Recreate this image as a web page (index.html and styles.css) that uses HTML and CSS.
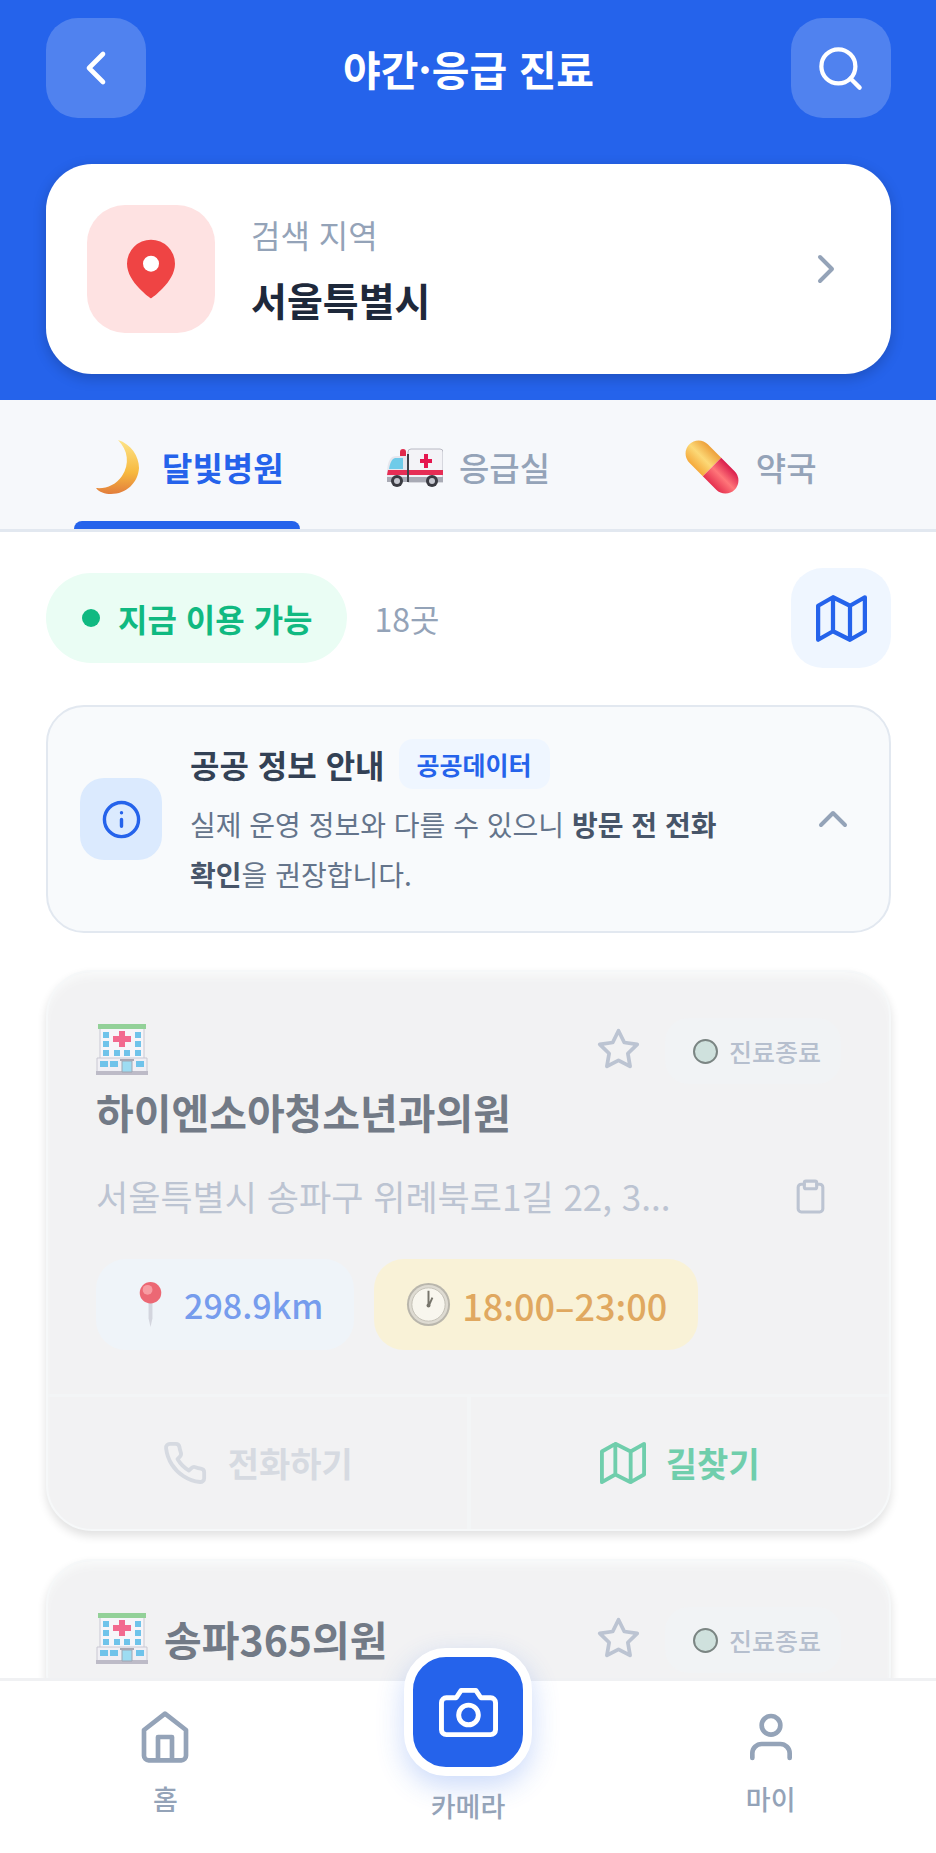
FILE: index.html
```
<!DOCTYPE html>
<html lang="ko">
<head>
<meta charset="UTF-8">
<meta name="viewport" content="width=device-width, initial-scale=1.0">
<title>야간·응급 진료</title>
<link rel="stylesheet" href="styles.css">
</head>
<body>
<svg class="defs" width="0" height="0" aria-hidden="true">
    <symbol id="map" viewBox="0 0 24 24">
        <path d="M1 6v16l7-4 8 4 7-4V2l-7 4-8-4-7 4zM8 2v16M16 6v16"/>
    </symbol>
    <symbol id="star" viewBox="0 0 24 24">
        <path d="M12 2l3.09 6.26L22 9.27l-5 4.87 1.18 6.88L12 17.77l-6.18 3.25L7 14.14 2 9.27l6.91-1.01z"/>
    </symbol>
    <symbol id="hospital" viewBox="0 0 52 52">
        <path d="M4 5h44v31H4z" fill="#f6f5f9" stroke="#c9c8d2"/>
        <path d="M2 1h48v5H2z" fill="#93d198"/>
        <path d="M1 35h50v14H1z" fill="#f0eff4" stroke="#c9c8d2"/>
        <path d="M0 48h52v4H0z" fill="#bdbbc7"/>
        <path d="M23 8h6v5h6v6h-6v5h-6v-5h-6v-6h6z" fill="#f2698f"/>
        <path d="M7 9h6v6H7zM39 9h6v6h-6zM7 18h6v6H7zM39 18h6v6h-6zM7 27h6v6H7zM18 27h6v6h-6zM28 27h6v6h-6zM39 27h6v6h-6zM4 38h8v6H4zM14 38h8v6h-8zM40 38h8v6h-8z" fill="#6fc3ea"/>
        <path d="M26 38h10v11H26z" fill="#9ddcf2" stroke="#9fa6b2"/>
        <path d="M24 36h14v2H24z" fill="#a9a8b4"/>
    </symbol>
</svg>

<div class="app">
    <header class="header">
        <div class="top-bar">
            <button class="square-btn" aria-label="뒤로">
                <svg class="icon back-icon" viewBox="0 0 24 24"><path d="M15 18l-6-6 6-6"/></svg>
            </button>
            <h1>야간·응급 진료</h1>
            <button class="square-btn" aria-label="검색">
                <svg class="icon search-icon" viewBox="0 0 24 24"><circle cx="11" cy="11" r="8"/><path d="M21 21l-4.3-4.3"/></svg>
            </button>
        </div>
        <button class="region">
            <span class="region-icon">
                <svg viewBox="0 0 24 24"><path d="M21 10c0 7-9 13-9 13s-9-6-9-13a9 9 0 0 1 18 0z" fill="#ef4444"/><circle cx="12" cy="10" r="3" fill="#fff"/></svg>
            </span>
            <span class="region-text">
                <span class="region-label">검색 지역</span>
                <span class="region-name">서울특별시</span>
            </span>
            <svg class="icon chevron" viewBox="0 0 24 24"><path d="M9 18l6-6-6-6"/></svg>
        </button>
    </header>

    <nav class="tabs">
        <button class="tab active">
            <svg class="emoji" viewBox="0 0 56 56">
                <defs><linearGradient id="moon" x1="0" y1="0" x2="0" y2="1"><stop offset="0" stop-color="#fde489"/><stop offset=".6" stop-color="#f7b93f"/><stop offset="1" stop-color="#e27d3c"/></linearGradient></defs>
                <path d="M28 1c13 4 21 16 21 28-1 15-13 26-28 26-6 0-12-2-15-6 10 1 20-3 26-12 8-12 6-26-4-36z" fill="url(#moon)"/>
            </svg>
            달빛병원
        </button>
        <button class="tab">
            <svg class="emoji" viewBox="0 0 56 56">
                <path d="M13 17v-4q0-3 3-3t3 3v4z" fill="#e0294a"/>
                <path d="M24 10h29q3 0 3 3v30H21V13q0-3 3-3z" fill="#f3f3f7" stroke="#b9bac4"/>
                <path d="M10 17h11v24H0V31q1-10 5-13 2-1 5-1z" fill="#e6e7ee"/>
                <path d="M8 19h8v11H2q1-7 4-10z" fill="#6fcbe9"/>
                <path d="M1 31h19v5H0zM22 31h34v5H22z" fill="#e62e55"/>
                <path d="M0 38h56v5H0z" fill="#a9abb5"/>
                <path d="M20 15h2v28h-2z" fill="#3f4149"/>
                <path d="M37 15h4v5h4v4h-4v5h-4v-5h-4v-4h4z" fill="#e5164f"/>
                <circle cx="10" cy="42" r="6" fill="#3a3b42"/><circle cx="10" cy="42" r="3" fill="#c6c8d0"/>
                <circle cx="45" cy="42" r="6" fill="#3a3b42"/><circle cx="45" cy="42" r="3" fill="#c6c8d0"/>
            </svg>
            응급실
        </button>
        <button class="tab">
            <svg class="emoji" viewBox="0 0 56 56">
                <defs>
                    <linearGradient id="pillTop"><stop offset="0" stop-color="#f5a93b"/><stop offset=".5" stop-color="#fcd977"/><stop offset="1" stop-color="#eda03a"/></linearGradient>
                    <linearGradient id="pillBottom"><stop offset="0" stop-color="#e5304f"/><stop offset=".5" stop-color="#ff7679"/><stop offset="1" stop-color="#d91c4c"/></linearGradient>
                </defs>
                <g transform="rotate(-45 28 28)">
                    <path d="M15 28V9a13 13 0 0 1 26 0v19z" fill="url(#pillTop)"/>
                    <path d="M15 28v19a13 13 0 0 0 26 0V28z" fill="url(#pillBottom)"/>
                </g>
            </svg>
            약국
        </button>
    </nav>

    <main class="content">
        <div class="filters">
            <button class="available"><span class="dot"></span>지금 이용 가능</button>
            <span class="count">18곳</span>
            <button class="square-btn map-btn" aria-label="지도 보기">
                <svg class="icon map-icon"><use href="#map"/></svg>
            </button>
        </div>

        <section class="notice">
            <span class="notice-icon">
                <svg class="icon" viewBox="0 0 24 24"><circle cx="12" cy="12" r="10"/><path d="M12 16v-4M12 8h.01"/></svg>
            </span>
            <div class="notice-body">
                <div class="notice-head">
                    <h2>공공 정보 안내</h2>
                    <span class="source">공공데이터</span>
                </div>
                <p>실제 운영 정보와 다를 수 있으니 <strong>방문 전 전화 확인</strong>을 권장합니다.</p>
            </div>
            <button class="plain-btn" aria-label="접기">
                <svg class="icon chevron" viewBox="0 0 24 24"><path d="M18 15l-6-6-6 6"/></svg>
            </button>
        </section>

        <div class="list">
            <article class="card">
                <div class="card-body">
                    <div class="card-head">
                        <h3><svg class="hospital"><use href="#hospital"/></svg><span>하이엔소아청소년과의원</span></h3>
                        <button class="plain-btn star" aria-label="즐겨찾기"><svg class="icon"><use href="#star"/></svg></button>
                        <span class="status"><span class="status-dot"></span>진료종료</span>
                    </div>
                    <div class="address">
                        <span>서울특별시 송파구 위례북로1길 22, 3...</span>
                        <button class="plain-btn copy" aria-label="주소 복사">
                            <svg class="icon" viewBox="0 0 24 24"><path d="M16 4h2a2 2 0 0 1 2 2v14a2 2 0 0 1-2 2H6a2 2 0 0 1-2-2V6a2 2 0 0 1 2-2h2"/><rect x="8" y="2" width="8" height="5" rx="1"/></svg>
                        </button>
                    </div>
                    <div class="chips">
                        <span class="chip distance">
                            <svg viewBox="0 0 48 48">
                                <path d="M22 20h4v18l-2 9-2-9z" fill="#d3d5de"/>
                                <circle cx="24" cy="12" r="11" fill="#ec6874"/><circle cx="21" cy="9" r="5" fill="#f79ca2"/>
                            </svg>
                            298.9km
                        </span>
                        <span class="chip hours">
                            <svg viewBox="0 0 48 48">
                                <circle cx="24" cy="24" r="22" fill="#b9b6ac"/><circle cx="24" cy="24" r="20" fill="#dedbd2"/>
                                <circle cx="24" cy="24" r="17" fill="#f8f6ee" stroke="#c4c1b6"/>
                                <path d="M24 26V10M24 26l4-9" stroke="#77756c" stroke-width="2" fill="none"/><circle cx="24" cy="25" r="2" fill="#77756c"/>
                            </svg>
                            18:00–23:00
                        </span>
                    </div>
                </div>
                <div class="actions">
                    <button class="action" disabled>
                        <svg class="icon" viewBox="0 0 24 24"><path d="M22 16.92v3a2 2 0 0 1-2.18 2 19.79 19.79 0 0 1-8.63-3.07 19.5 19.5 0 0 1-6-6 19.79 19.79 0 0 1-3.07-8.67A2 2 0 0 1 4.11 2h3a2 2 0 0 1 2 1.72c.127.96.361 1.903.7 2.81a2 2 0 0 1-.45 2.11L8.09 9.91a16 16 0 0 0 6 6l1.27-1.27a2 2 0 0 1 2.11-.45c.907.339 1.85.573 2.81.7A2 2 0 0 1 22 16.92z"/></svg>
                        전화하기
                    </button>
                    <button class="action directions">
                        <svg class="icon"><use href="#map"/></svg>
                        길찾기
                    </button>
                </div>
            </article>

            <article class="card">
                <div class="card-body">
                    <div class="card-head">
                        <h3><svg class="hospital"><use href="#hospital"/></svg><span>송파365의원</span></h3>
                        <button class="plain-btn star" aria-label="즐겨찾기"><svg class="icon"><use href="#star"/></svg></button>
                        <span class="status"><span class="status-dot"></span>진료종료</span>
                    </div>
                </div>
            </article>
        </div>
    </main>

    <nav class="bottom-nav">
        <a href="#home">
            <svg class="icon" viewBox="0 0 24 24"><path d="M3 9l9-7 9 7v11a2 2 0 0 1-2 2H5a2 2 0 0 1-2-2zM9 22V12h6v10"/></svg>
            홈
        </a>
        <a href="#camera" class="camera">
            <span class="camera-btn">
                <svg class="icon" viewBox="0 0 24 24"><path d="M23 19a2 2 0 0 1-2 2H3a2 2 0 0 1-2-2V8a2 2 0 0 1 2-2h4l2-3h6l2 3h4a2 2 0 0 1 2 2z"/><circle cx="12" cy="13" r="4"/></svg>
            </span>
            카메라
        </a>
        <a href="#my">
            <svg class="icon" viewBox="0 0 24 24"><path d="M20 21v-2a4 4 0 0 0-4-4H8a4 4 0 0 0-4 4v2"/><circle cx="12" cy="7" r="4"/></svg>
            마이
        </a>
    </nav>
</div>
</body>
</html>
```
FILE: styles.css
```
* {
    box-sizing: border-box;
}

body {
    margin: 0;
    font-family: "Noto Sans CJK KR", sans-serif;
    background-color: #fff;
    word-break: keep-all;
}

h1, h2, h3, p {
    margin: 0;
}

button {
    font-family: inherit;
    padding: 0;
    border: none;
    background: none;
    cursor: pointer;
}

.defs {
    position: absolute;
}

.icon {
    flex: none;
    fill: none;
    stroke: currentColor;
    stroke-width: 2;
    stroke-linecap: round;
    stroke-linejoin: round;
}

.app {
    display: flex;
    flex-direction: column;
    height: 100vh;
}

/* header */
.header {
    flex: none;
    padding: 18px 45px 26px 46px;
    background-color: #2563eb;
}

.top-bar {
    display: flex;
    align-items: center;
    justify-content: space-between;
    margin-bottom: 46px;
    color: #fff;
}

.top-bar h1 {
    font-size: 41px;
    line-height: 60px;
    font-weight: 700;
}

.square-btn {
    display: flex;
    align-items: center;
    justify-content: center;
    width: 100px;
    height: 100px;
    border-radius: 32px;
    color: #fff;
    background-color: rgba(255, 255, 255, 0.2);
}

.back-icon {
    width: 56px;
    height: 56px;
}

.search-icon {
    width: 51px;
    height: 51px;
}

.region {
    display: flex;
    align-items: center;
    width: 100%;
    padding: 41px;
    border-radius: 46px;
    background-color: #fff;
    box-shadow: 0 4px 14px rgba(0, 0, 0, 0.2);
    text-align: left;
}

.region-icon {
    display: flex;
    align-items: center;
    justify-content: center;
    width: 128px;
    height: 128px;
    border-radius: 38px;
    background-color: #fee2e2;
}

.region-icon svg {
    width: 64px;
    height: 64px;
}

.region-text {
    display: flex;
    flex: 1;
    flex-direction: column;
    gap: 10px;
    margin-left: 36px;
}

.region-label {
    font-size: 32px;
    line-height: 50px;
    color: #94a3b8;
}

.region-name {
    font-size: 39px;
    line-height: 60px;
    font-weight: 700;
    color: #1e293b;
}

.chevron {
    width: 48px;
    height: 48px;
    color: #94a3b8;
}

/* tabs */
.tabs {
    display: flex;
    flex: none;
    padding: 0 45px 0 46px;
    border-bottom: 3px solid #e2e8f0;
    background-color: #f6f8fb;
}

.tab {
    position: relative;
    display: flex;
    flex: 1;
    align-items: center;
    justify-content: center;
    gap: 16px;
    height: 129px;
    padding-top: 4px;
    font-size: 33px;
    line-height: 50px;
    font-weight: 500;
    color: #94a3b8;
}

.tab.active {
    font-weight: 700;
    color: #2563eb;
}

.tab.active::after {
    content: "";
    position: absolute;
    left: 28px;
    right: 28px;
    bottom: 0;
    height: 8px;
    border-radius: 8px 8px 0 0;
    background-color: #2563eb;
}

.emoji {
    width: 56px;
    height: 56px;
}

/* content */
.content {
    display: flex;
    flex: 1;
    flex-direction: column;
    gap: 37px;
    min-height: 0;
    padding: 36px 45px 0 46px;
    overflow: hidden;
}

.filters {
    display: flex;
    flex: none;
    align-items: center;
}

.available {
    display: flex;
    align-items: center;
    gap: 18px;
    height: 90px;
    padding: 0 34px 0 36px;
    border-radius: 45px;
    font-size: 32px;
    line-height: 50px;
    font-weight: 700;
    color: #10b981;
    background-color: #eafdf4;
}

.dot {
    width: 18px;
    height: 18px;
    border-radius: 50%;
    background-color: #10b981;
}

.count {
    margin-left: 28px;
    font-size: 32px;
    line-height: 50px;
    color: #94a3b8;
}

.map-btn {
    margin-left: auto;
    color: #2563eb;
    background-color: #eff6ff;
}

.map-icon {
    width: 51px;
    height: 51px;
}

.notice {
    display: flex;
    flex: none;
    align-items: center;
    gap: 28px;
    padding: 32px;
    border: 2px solid #e2e8f0;
    border-radius: 38px;
    background-color: #f8fafc;
}

.notice-icon {
    display: flex;
    flex: none;
    align-items: center;
    justify-content: center;
    width: 82px;
    height: 82px;
    border-radius: 24px;
    color: #2563eb;
    background-color: #dbeafe;
}

.notice-icon svg {
    width: 41px;
    height: 41px;
}

.notice-body {
    flex: 1;
}

.notice-head {
    display: flex;
    align-items: center;
    gap: 14px;
    margin-bottom: 10px;
}

.notice-head h2 {
    font-size: 32px;
    line-height: 50px;
    font-weight: 700;
    color: #334155;
}

.source {
    padding: 0 18px;
    border-radius: 14px;
    font-size: 25px;
    line-height: 50px;
    font-weight: 700;
    color: #2563eb;
    background-color: #eff6ff;
}

.notice-body p {
    font-size: 28px;
    line-height: 50px;
    color: #64748b;
}

.notice-body strong {
    font-weight: 700;
    color: #475569;
}

.plain-btn {
    display: flex;
    flex: none;
}

/* hospital cards */
.list {
    display: flex;
    flex: none;
    flex-direction: column;
    gap: 28px;
}

.card {
    border: 2px solid #f6f8f9;
    border-radius: 46px;
    background-color: #f2f2f3;
    box-shadow: 0 5px 10px rgba(0, 0, 0, 0.12), inset 0 8px 8px -4px #f9fafa;
}

.card-body {
    padding: 46px 48px 44px;
}

.card-head {
    display: flex;
    align-items: flex-start;
    gap: 24px;
}

.card-head h3 {
    display: flex;
    flex: 1;
    flex-wrap: wrap;
    align-items: center;
    column-gap: 16px;
    font-size: 41px;
    line-height: 62px;
    font-weight: 700;
    color: #727a86;
}

.hospital {
    width: 52px;
    height: 62px;
}

.star {
    align-items: center;
    height: 62px;
    color: #bcc4d2;
}

.star svg {
    width: 45px;
    height: 45px;
}

.status {
    display: flex;
    align-items: center;
    gap: 11px;
    padding: 0 20px 0 28px;
    border-radius: 24px;
    font-size: 25px;
    line-height: 66px;
    font-weight: 500;
    color: #b6bfce;
    background-color: #f1f3f5;
}

.status-dot {
    width: 25px;
    height: 25px;
    border: 2px solid #7b8583;
    border-radius: 50%;
    background-color: #cfe1dd;
}

.address {
    display: flex;
    align-items: center;
    justify-content: space-between;
    margin: 29px 0 38px;
    font-size: 35px;
    line-height: 50px;
    color: #bcc4d2;
}

.copy {
    margin-right: 12px;
    color: #bcc4d2;
}

.copy svg {
    width: 37px;
    height: 37px;
}

.chips {
    display: flex;
    gap: 20px;
}

.chip {
    display: flex;
    align-items: center;
    gap: 10px;
    height: 91px;
    padding: 0 31px;
    border-radius: 30px;
    font-size: 34px;
    line-height: 50px;
    font-weight: 500;
}

.chip svg {
    width: 47px;
    height: 47px;
}

.distance {
    color: #769ced;
    background-color: #eff4f9;
}

.hours {
    font-size: 36px;
    color: #e0a860;
    background-color: #f9f2d7;
}

.actions {
    display: flex;
    border-top: 3px solid #f3f5f6;
}

.action {
    display: flex;
    flex: 1;
    align-items: center;
    justify-content: center;
    gap: 20px;
    height: 132px;
    font-size: 34px;
    line-height: 50px;
    font-weight: 700;
    color: #d6dae1;
}

.action svg {
    width: 46px;
    height: 46px;
}

.directions {
    border-left: 4px solid #f3f5f6;
    color: #70ceac;
}

/* bottom navigation */
.bottom-nav {
    z-index: 1;
    display: flex;
    flex: none;
    padding: 28px 14px 25px;
    border-top: 3px solid #f0f1f3;
    background-color: #fff;
}

.bottom-nav a {
    display: flex;
    flex: 1;
    flex-direction: column;
    align-items: center;
    gap: 12px;
    font-size: 27px;
    line-height: 44px;
    font-weight: 500;
    color: #94a3b8;
    text-decoration: none;
}

.bottom-nav svg {
    width: 56px;
    height: 56px;
}

.bottom-nav .camera {
    gap: 8px;
    margin-top: -61px;
}

.camera-btn {
    display: flex;
    align-items: center;
    justify-content: center;
    width: 128px;
    height: 128px;
    border: 9px solid #fff;
    border-radius: 42px;
    color: #fff;
    background-color: #2563eb;
    box-shadow: 0 10px 28px rgba(37, 99, 235, 0.24);
}

.bottom-nav .camera-btn svg {
    width: 59px;
    height: 59px;
}
```
